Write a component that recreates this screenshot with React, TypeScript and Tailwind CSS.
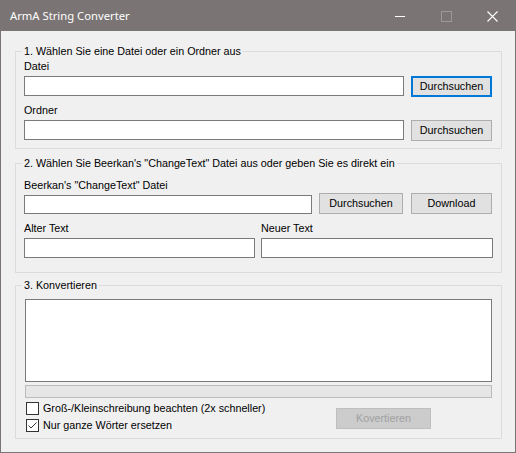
import React from 'react';

const font = { fontFamily: '"Liberation Sans", Arial, sans-serif' };

function TextBox({ className }: { className: string }) {
  return <input readOnly className={`block bg-white border border-[#7a7a7a] outline-none ${className}`} />;
}

function Button({ label, className, focused, disabled }: { label: string; className: string; focused?: boolean; disabled?: boolean }) {
  const look = disabled
    ? 'bg-[#cccccc] border border-[#bfbfbf] text-[#a0a0a0]'
    : focused
      ? 'bg-[#e1e1e1] border-2 border-[#0078d7] text-black'
      : 'bg-[#e1e1e1] border border-[#adadad] text-black';
  return (
    <button className={`flex items-center justify-center shrink-0 text-[10.75px] leading-[13px] ${look} ${className}`}>
      {label}
    </button>
  );
}

function Group({ title, className, children }: { title: string; className: string; children: React.ReactNode }) {
  return (
    <fieldset className={`border border-[#dcdcdc] w-[487px] ${className}`}>
      <legend className="ml-[6px] px-[2px] text-[10.75px] leading-[13px] text-black">{title}</legend>
      <div className="px-[8px] flex flex-col">{children}</div>
    </fieldset>
  );
}

function Label({ text, className }: { text: string; className: string }) {
  return <div className={`h-[13px] text-[10.75px] leading-[13px] text-black ${className}`}>{text}</div>;
}

function CheckBox({ label, checked, className }: { label: string; checked?: boolean; className: string }) {
  return (
    <div className={`flex items-center ${className}`}>
      <div className="w-[13px] h-[13px] bg-white border border-[#333333] flex items-center justify-center">
        {checked && (
          <svg width="11" height="11" viewBox="0 0 11 11">
            <polyline points="1.5,5.5 4,8 9.5,2.5" fill="none" stroke="#333333" strokeWidth="1" />
          </svg>
        )}
      </div>
      <span className="ml-[4px] text-[10.75px] leading-[13px] text-black">{label}</span>
    </div>
  );
}

export default function App() {
  return (
    <div className="w-[516px] h-[453px] border border-[#7a7574] bg-[#f0f0f0] flex flex-col" style={font}>
      {/* title bar */}
      <div className="h-[30px] bg-[#7a7574] flex items-center shrink-0">
        <span
          className="ml-[9px] text-[11.25px] text-white flex-1"
          style={{ fontFamily: '"Noto Sans", "Open Sans", sans-serif' }}
        >
          ArmA String Converter
        </span>
        <div className="w-[46px] h-[30px] flex items-center justify-center">
          <div className="w-[10px] h-px bg-white" />
        </div>
        <div className="w-[46px] h-[30px] flex items-center justify-center">
          <div className="w-[11px] h-[11px] border border-[#9d9997]" />
        </div>
        <div className="w-[46px] h-[30px] flex items-center justify-center">
          <svg width="11" height="11" viewBox="0 0 11 11">
            <path d="M0.5 0.5 L10.5 10.5 M10.5 0.5 L0.5 10.5" stroke="#ffffff" strokeWidth="1.1" />
          </svg>
        </div>
      </div>

      <div className="pl-[14px] flex flex-col">
        <Group title="1. Wählen Sie eine Datei oder ein Ordner aus" className="mt-[14px]">
          <Label text="Datei" className="mt-[2px]" />
          <div className="flex items-start mt-[3px]">
            <TextBox className="w-[380px] h-[20px]" />
            <Button label="Durchsuchen" focused className="ml-[7px] w-[81px] h-[21px]" />
          </div>
          <Label text="Ordner" className="mt-[7px]" />
          <div className="flex items-start mt-[3px] mb-[7px]">
            <TextBox className="w-[380px] h-[20px]" />
            <Button label="Durchsuchen" className="ml-[7px] w-[81px] h-[21px]" />
          </div>
        </Group>

        <Group title={'2. Wählen Sie Beerkan\'s "ChangeText" Datei aus oder geben Sie es direkt ein'} className="mt-[8px]">
          <Label text={'Beerkan\'s "ChangeText" Datei'} className="mt-[9px]" />
          <div className="flex items-start mt-[1px]">
            <TextBox className="w-[288px] h-[19px] mt-[2px]" />
            <Button label="Durchsuchen" className="ml-[7px] w-[84px] h-[21px]" />
            <Button label="Download" className="ml-[8px] w-[81px] h-[21px]" />
          </div>
          <div className="flex mt-[8px] mb-[14px]">
            <div className="flex flex-col">
              <Label text="Alter Text" className="" />
              <TextBox className="w-[231px] h-[20px] mt-[3px]" />
            </div>
            <div className="flex flex-col ml-[6px]">
              <Label text="Neuer Text" className="" />
              <TextBox className="w-[232px] h-[20px] mt-[3px]" />
            </div>
          </div>
        </Group>

        <Group title="3. Konvertieren" className="mt-[6px]">
          <textarea readOnly className="block ml-[1px] mt-[7px] w-[467px] h-[83px] bg-white border border-[#7a7a7a] resize-none outline-none" />
          <div className="ml-[1px] mt-[3px] w-[467px] h-[13px] bg-[#e6e6e6] border border-[#bcbcbc]" />
          <div className="flex items-start mb-[6px]">
            <div className="w-[310px] ml-[2px] flex flex-col">
              <CheckBox label="Groß-/Kleinschreibung beachten (2x schneller)" className="mt-[4px]" />
              <CheckBox label="Nur ganze Wörter ersetzen" checked className="mt-[4px]" />
            </div>
            <Button label="Kovertieren" disabled className="mt-[10px] w-[95px] h-[21px]" />
          </div>
        </Group>
      </div>
    </div>
  );
}
